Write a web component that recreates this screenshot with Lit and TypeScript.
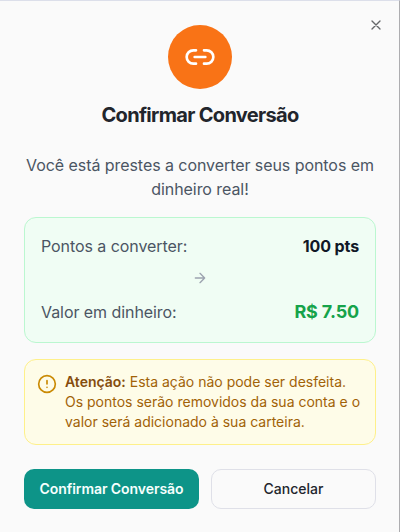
import { LitElement, html, css } from "lit";
import { customElement } from "lit/decorators.js";

@customElement("app-root")
export class AppRoot extends LitElement {
  static styles = css`
    :host { display: block; width: 402px; height: 532px; background: #fff; overflow: hidden; }
    * { box-sizing: border-box; }
    .dialog {
      position: relative; width: 400px; height: 532px; padding: 24px 23px 0 24px;
      background: #fafafa; border-top: 1px solid #dcdfea; border-right: 1px solid #adadb0;
      font-family: Inter, "Liberation Sans", sans-serif; color: #22252c;
      display: flex; flex-direction: column;
    }
    svg { display: block; fill: none; stroke: currentColor; stroke-width: 2; stroke-linecap: round; stroke-linejoin: round; flex: none; }
    button { font: inherit; color: inherit; border: 0; background: none; padding: 0; margin: 0; }
    .close { position: absolute; top: 16px; right: 15px; color: #646669; }
    .badge { width: 64px; height: 64px; border-radius: 50%; background: #f97316; color: #fff; display: flex; align-items: center; justify-content: center; align-self: center; }
    h2 { margin: 12px 0 0; font-size: 20px; line-height: 28px; font-weight: 650; letter-spacing: -0.68px; text-align: center; }
    .lead { margin: 24px 0 0; font-size: 16px; line-height: 24px; letter-spacing: -0.065px; color: #4b5563; text-align: center; }
    .summary { margin-top: 16px; padding: 16px; border: 1px solid #bbf7d0; border-radius: 12px; background: #f0fdf4; display: flex; flex-direction: column; gap: 12px; font-size: 16px; line-height: 24px; letter-spacing: -0.065px; color: #4b5563; }
    .row { display: flex; justify-content: space-between; align-items: center; }
    .points { font-weight: 700; letter-spacing: -0.1px; color: #111827; }
    .money { font-size: 18px; line-height: 28px; font-weight: 700; letter-spacing: -0.15px; color: #16a34a; }
    .arrow { align-self: center; color: #9ca3af; }
    .warn { margin-top: 16px; padding: 12px; border: 1px solid #fef08a; border-radius: 12px; background: #fefce8; display: flex; gap: 8px; font-size: 14px; line-height: 20px; color: #a16207; }
    .warn svg { margin-top: 2px; color: #ca8a04; }
    .warn strong { font-weight: 600; color: #854d0e; }
    .actions { margin-top: 24px; display: flex; gap: 12px; font-size: 14px; line-height: 20px; }
    .btn { height: 40px; border-radius: 10px; white-space: nowrap; }
    .primary { width: 175px; background: #0d9488; color: #f6fffd; font-weight: 600; letter-spacing: -0.07px; }
    .secondary { flex: 1; border: 1px solid #dfe0e8; font-weight: 500; }
  `;

  render() {
    return html`
      <div class="dialog" role="dialog">
        <button class="close" aria-label="Fechar">
          <svg width="16" height="16" viewBox="0 0 24 24"><path d="M18 6 6 18M6 6l12 12" /></svg>
        </button>
        <div class="badge">
          <svg width="32" height="32" viewBox="0 0 24 24"><path d="M9 17H7A5 5 0 0 1 7 7h2M15 7h2a5 5 0 1 1 0 10h-2M8 12h8" /></svg>
        </div>
        <h2>Confirmar Conversão</h2>
        <p class="lead">Você está prestes a converter seus pontos em dinheiro real!</p>
        <div class="summary">
          <div class="row"><span>Pontos a converter:</span><span class="points">100 pts</span></div>
          <svg class="arrow" width="16" height="16" viewBox="0 0 24 24"><path d="M5 12h14M12 5l7 7-7 7" /></svg>
          <div class="row"><span>Valor em dinheiro:</span><span class="money">R$ 7.50</span></div>
        </div>
        <div class="warn">
          <svg width="20" height="20" viewBox="0 0 24 24"><circle cx="12" cy="12" r="10" /><path d="M12 8v4M12 16h.01" /></svg>
          <div><strong>Atenção:</strong> Esta ação não pode ser desfeita. Os pontos serão removidos da sua conta e o valor será adicionado à sua carteira.</div>
        </div>
        <div class="actions">
          <button class="btn primary">Confirmar Conversão</button>
          <button class="btn secondary">Cancelar</button>
        </div>
      </div>
    `;
  }
}
